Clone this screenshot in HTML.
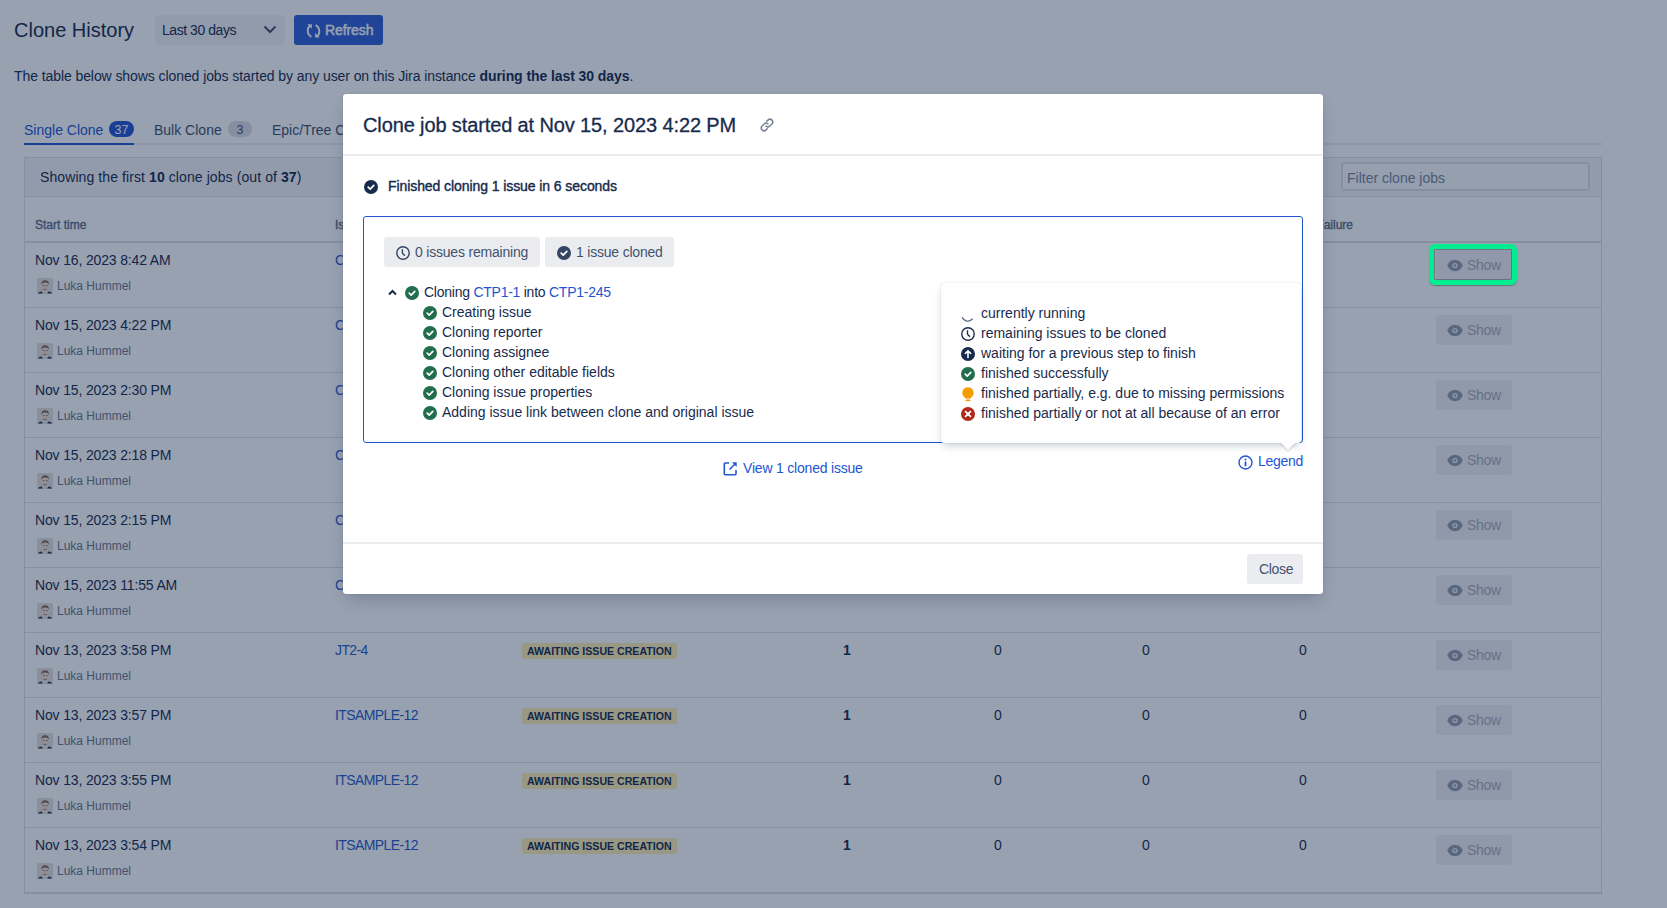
<!DOCTYPE html>
<html><head><meta charset="utf-8">
<style>
*{box-sizing:border-box}
html,body{margin:0;padding:0}
body{width:1667px;height:908px;overflow:hidden;position:relative;background:#fff;font-family:"Liberation Sans",sans-serif;color:#172b4d;font-size:14px}
.a{position:absolute;white-space:nowrap}
.t{line-height:1}
.lz{height:16px;width:155px;background:#fff0b3;border-radius:3px;font-size:10.6px;font-weight:bold;line-height:16px;padding-left:5px;color:#172b4d}
.g{width:14px;height:14px}
.btn{width:76px;height:30px;background:#f1f2f4;border-radius:3px;color:#a5adba}
</style></head><body>

<!-- page -->
<div class="a t" style="left:14px;top:20px;font-size:20px">Clone History</div>
<div class="a" style="left:155px;top:15px;width:130px;height:30px;background:#f4f5f7;border-radius:3px"></div>
<div class="a t" style="left:162px;top:23px;font-size:14px;letter-spacing:-0.45px">Last 30 days</div>
<svg class="a" style="left:263px;top:25px" width="14" height="9" viewBox="0 0 14 9"><path d="M1.5 1.5L7 7l5.5-5.5" stroke="#42526e" stroke-width="2" fill="none"/></svg>
<div class="a" style="left:294px;top:15px;width:89px;height:30px;background:#3060d6;border-radius:3px"></div>
<svg class="a" style="left:305px;top:23px" width="17" height="17" viewBox="0 0 17 17"><g fill="none" stroke="#fff" stroke-width="1.9"><path d="M5.4 2.6C2 4.4 1.4 11 6.4 14"/><path d="M10.6 2.2C15.6 4.8 15.2 11.8 11.6 13.6"/></g><path d="M2.4 1.2H6.9V5.7z" fill="#fff"/><path d="M10.1 9.9V14.6H14.6z" fill="#fff"/></svg>
<div class="a t" style="left:325px;top:23px;font-size:14px;color:#fff;-webkit-text-stroke:0.45px #fff;letter-spacing:-0.1px">Refresh</div>
<div class="a t" style="left:14px;top:69px;letter-spacing:-0.08px">The table below shows cloned jobs started by any user on this Jira instance <b>during the last 30 days</b>.</div>

<!-- tabs -->
<div class="a" style="left:24px;top:143px;width:1578px;height:2px;background:#ebecf0"></div>
<div class="a" style="left:24px;top:143px;width:110px;height:2px;background:#2355d2"></div>
<div class="a t" style="left:24px;top:123px;color:#2355d2">Single Clone</div>
<div class="a t" style="left:109px;top:121px;width:25px;height:16px;border-radius:8px;background:#2355d2;color:#fff;font-size:12.5px;line-height:18.5px;text-align:center">37</div>
<div class="a t" style="left:154px;top:123px;color:#42526e">Bulk Clone</div>
<div class="a t" style="left:228px;top:121px;width:24px;height:16px;border-radius:8px;background:#dfe1e6;color:#42526e;font-size:12.5px;line-height:18.5px;text-align:center">3</div>
<div class="a t" style="left:272px;top:123px;color:#42526e">Epic/Tree Clone</div>

<!-- table -->
<div class="a" style="left:24px;top:157px;width:1578px;height:736px;border:1px solid #dfe1e6"></div>
<div class="a" style="left:25px;top:158px;width:1576px;height:39px;background:#f4f5f7;border-bottom:1px solid #dfe1e6"></div>
<div class="a t" style="left:40px;top:170px;letter-spacing:0.09px">Showing the first <b>10</b> clone jobs (out of <b>37</b>)</div>
<div class="a" style="left:1341px;top:162px;width:249px;height:29px;border:2px solid #dfe1e6;border-radius:3px;background:#fafbfc"></div>
<div class="a t" style="left:1347px;top:171px;color:#7a869a">Filter clone jobs</div>
<div class="a t" style="left:35px;top:219px;font-size:12px;-webkit-text-stroke:0.35px #5e6c84;color:#5e6c84">Start time</div>
<div class="a t" style="left:335px;top:219px;font-size:12px;-webkit-text-stroke:0.35px #5e6c84;color:#5e6c84">Issue</div>
<div class="a t" style="right:314px;top:219px;font-size:12px;-webkit-text-stroke:0.35px #5e6c84;color:#5e6c84">Failure</div>
<div class="a" style="left:24px;top:241px;width:1578px;height:2px;background:#dfe1e6"></div>
<div class="a t" style="left:35px;top:253px;letter-spacing:-0.15px">Nov 16, 2023 8:42 AM</div>
<div class="a" style="left:37px;top:278px;width:16px;height:16px"><svg width="16" height="16" viewBox="0 0 16 16" style="position:absolute;left:0;top:0"><rect width="16" height="16" rx="1.5" fill="#e4e1de"/><path d="M4.6 6.8Q4.6 3 8.2 3 11.6 3 11.6 6.8L11.4 10Q10.6 13 8.1 13 5.6 13 4.8 10Z" fill="#f2e0d2"/><path d="M4.3 7.3Q4 2.4 8.2 2.3 12.2 2.4 12 7.3 11.6 4.6 8.2 4.5 4.8 4.6 4.3 7.3Z" fill="#8a6a55"/><path d="M6 7.6h1.5M9 7.6h1.5" stroke="#7a5a48" stroke-width=".9"/><path d="M6.4 11.2Q8.1 12.2 9.8 11.2" stroke="#8a6a5a" stroke-width=".8" fill="none"/><path d="M0.8 15.6Q2 13.8 4.5 13.6L5.8 15.6ZM15.2 15.6Q14 13.8 11.5 13.6L10.2 15.6Z" fill="#2a3048"/></svg></div>
<div class="a t" style="left:57px;top:280px;font-size:12px;color:#6b778c">Luka Hummel</div>
<div class="a t" style="left:335px;top:253px;color:#2a5ac8;letter-spacing:-0.6px">C</div>
<div class="a btn" style="left:1436px;top:250px"><svg width="16" height="13" viewBox="0 0 16 13" style="position:absolute;left:11px;top:9px"><path d="M8 .8C4.2 .8 1.3 3.6.4 6.5 1.3 9.4 4.2 12.2 8 12.2s6.7-2.8 7.6-5.7C14.7 3.6 11.8.8 8 .8z" fill="#939cac"/><circle cx="8" cy="6.5" r="2.6" fill="#eef0f2"/><circle cx="8" cy="6.5" r="1.2" fill="#939cac"/></svg><span style="position:absolute;left:31px;top:8px;line-height:1;letter-spacing:-0.3px">Show</span></div>
<div class="a" style="left:24px;top:307px;width:1578px;height:1px;background:#dfe1e6"></div>
<div class="a t" style="left:35px;top:318px;letter-spacing:-0.15px">Nov 15, 2023 4:22 PM</div>
<div class="a" style="left:37px;top:343px;width:16px;height:16px"><svg width="16" height="16" viewBox="0 0 16 16" style="position:absolute;left:0;top:0"><rect width="16" height="16" rx="1.5" fill="#e4e1de"/><path d="M4.6 6.8Q4.6 3 8.2 3 11.6 3 11.6 6.8L11.4 10Q10.6 13 8.1 13 5.6 13 4.8 10Z" fill="#f2e0d2"/><path d="M4.3 7.3Q4 2.4 8.2 2.3 12.2 2.4 12 7.3 11.6 4.6 8.2 4.5 4.8 4.6 4.3 7.3Z" fill="#8a6a55"/><path d="M6 7.6h1.5M9 7.6h1.5" stroke="#7a5a48" stroke-width=".9"/><path d="M6.4 11.2Q8.1 12.2 9.8 11.2" stroke="#8a6a5a" stroke-width=".8" fill="none"/><path d="M0.8 15.6Q2 13.8 4.5 13.6L5.8 15.6ZM15.2 15.6Q14 13.8 11.5 13.6L10.2 15.6Z" fill="#2a3048"/></svg></div>
<div class="a t" style="left:57px;top:345px;font-size:12px;color:#6b778c">Luka Hummel</div>
<div class="a t" style="left:335px;top:318px;color:#2a5ac8;letter-spacing:-0.6px">C</div>
<div class="a btn" style="left:1436px;top:315px"><svg width="16" height="13" viewBox="0 0 16 13" style="position:absolute;left:11px;top:9px"><path d="M8 .8C4.2 .8 1.3 3.6.4 6.5 1.3 9.4 4.2 12.2 8 12.2s6.7-2.8 7.6-5.7C14.7 3.6 11.8.8 8 .8z" fill="#939cac"/><circle cx="8" cy="6.5" r="2.6" fill="#eef0f2"/><circle cx="8" cy="6.5" r="1.2" fill="#939cac"/></svg><span style="position:absolute;left:31px;top:8px;line-height:1;letter-spacing:-0.3px">Show</span></div>
<div class="a" style="left:24px;top:372px;width:1578px;height:1px;background:#dfe1e6"></div>
<div class="a t" style="left:35px;top:383px;letter-spacing:-0.15px">Nov 15, 2023 2:30 PM</div>
<div class="a" style="left:37px;top:408px;width:16px;height:16px"><svg width="16" height="16" viewBox="0 0 16 16" style="position:absolute;left:0;top:0"><rect width="16" height="16" rx="1.5" fill="#e4e1de"/><path d="M4.6 6.8Q4.6 3 8.2 3 11.6 3 11.6 6.8L11.4 10Q10.6 13 8.1 13 5.6 13 4.8 10Z" fill="#f2e0d2"/><path d="M4.3 7.3Q4 2.4 8.2 2.3 12.2 2.4 12 7.3 11.6 4.6 8.2 4.5 4.8 4.6 4.3 7.3Z" fill="#8a6a55"/><path d="M6 7.6h1.5M9 7.6h1.5" stroke="#7a5a48" stroke-width=".9"/><path d="M6.4 11.2Q8.1 12.2 9.8 11.2" stroke="#8a6a5a" stroke-width=".8" fill="none"/><path d="M0.8 15.6Q2 13.8 4.5 13.6L5.8 15.6ZM15.2 15.6Q14 13.8 11.5 13.6L10.2 15.6Z" fill="#2a3048"/></svg></div>
<div class="a t" style="left:57px;top:410px;font-size:12px;color:#6b778c">Luka Hummel</div>
<div class="a t" style="left:335px;top:383px;color:#2a5ac8;letter-spacing:-0.6px">C</div>
<div class="a btn" style="left:1436px;top:380px"><svg width="16" height="13" viewBox="0 0 16 13" style="position:absolute;left:11px;top:9px"><path d="M8 .8C4.2 .8 1.3 3.6.4 6.5 1.3 9.4 4.2 12.2 8 12.2s6.7-2.8 7.6-5.7C14.7 3.6 11.8.8 8 .8z" fill="#939cac"/><circle cx="8" cy="6.5" r="2.6" fill="#eef0f2"/><circle cx="8" cy="6.5" r="1.2" fill="#939cac"/></svg><span style="position:absolute;left:31px;top:8px;line-height:1;letter-spacing:-0.3px">Show</span></div>
<div class="a" style="left:24px;top:437px;width:1578px;height:1px;background:#dfe1e6"></div>
<div class="a t" style="left:35px;top:448px;letter-spacing:-0.15px">Nov 15, 2023 2:18 PM</div>
<div class="a" style="left:37px;top:473px;width:16px;height:16px"><svg width="16" height="16" viewBox="0 0 16 16" style="position:absolute;left:0;top:0"><rect width="16" height="16" rx="1.5" fill="#e4e1de"/><path d="M4.6 6.8Q4.6 3 8.2 3 11.6 3 11.6 6.8L11.4 10Q10.6 13 8.1 13 5.6 13 4.8 10Z" fill="#f2e0d2"/><path d="M4.3 7.3Q4 2.4 8.2 2.3 12.2 2.4 12 7.3 11.6 4.6 8.2 4.5 4.8 4.6 4.3 7.3Z" fill="#8a6a55"/><path d="M6 7.6h1.5M9 7.6h1.5" stroke="#7a5a48" stroke-width=".9"/><path d="M6.4 11.2Q8.1 12.2 9.8 11.2" stroke="#8a6a5a" stroke-width=".8" fill="none"/><path d="M0.8 15.6Q2 13.8 4.5 13.6L5.8 15.6ZM15.2 15.6Q14 13.8 11.5 13.6L10.2 15.6Z" fill="#2a3048"/></svg></div>
<div class="a t" style="left:57px;top:475px;font-size:12px;color:#6b778c">Luka Hummel</div>
<div class="a t" style="left:335px;top:448px;color:#2a5ac8;letter-spacing:-0.6px">C</div>
<div class="a btn" style="left:1436px;top:445px"><svg width="16" height="13" viewBox="0 0 16 13" style="position:absolute;left:11px;top:9px"><path d="M8 .8C4.2 .8 1.3 3.6.4 6.5 1.3 9.4 4.2 12.2 8 12.2s6.7-2.8 7.6-5.7C14.7 3.6 11.8.8 8 .8z" fill="#939cac"/><circle cx="8" cy="6.5" r="2.6" fill="#eef0f2"/><circle cx="8" cy="6.5" r="1.2" fill="#939cac"/></svg><span style="position:absolute;left:31px;top:8px;line-height:1;letter-spacing:-0.3px">Show</span></div>
<div class="a" style="left:24px;top:502px;width:1578px;height:1px;background:#dfe1e6"></div>
<div class="a t" style="left:35px;top:513px;letter-spacing:-0.15px">Nov 15, 2023 2:15 PM</div>
<div class="a" style="left:37px;top:538px;width:16px;height:16px"><svg width="16" height="16" viewBox="0 0 16 16" style="position:absolute;left:0;top:0"><rect width="16" height="16" rx="1.5" fill="#e4e1de"/><path d="M4.6 6.8Q4.6 3 8.2 3 11.6 3 11.6 6.8L11.4 10Q10.6 13 8.1 13 5.6 13 4.8 10Z" fill="#f2e0d2"/><path d="M4.3 7.3Q4 2.4 8.2 2.3 12.2 2.4 12 7.3 11.6 4.6 8.2 4.5 4.8 4.6 4.3 7.3Z" fill="#8a6a55"/><path d="M6 7.6h1.5M9 7.6h1.5" stroke="#7a5a48" stroke-width=".9"/><path d="M6.4 11.2Q8.1 12.2 9.8 11.2" stroke="#8a6a5a" stroke-width=".8" fill="none"/><path d="M0.8 15.6Q2 13.8 4.5 13.6L5.8 15.6ZM15.2 15.6Q14 13.8 11.5 13.6L10.2 15.6Z" fill="#2a3048"/></svg></div>
<div class="a t" style="left:57px;top:540px;font-size:12px;color:#6b778c">Luka Hummel</div>
<div class="a t" style="left:335px;top:513px;color:#2a5ac8;letter-spacing:-0.6px">C</div>
<div class="a btn" style="left:1436px;top:510px"><svg width="16" height="13" viewBox="0 0 16 13" style="position:absolute;left:11px;top:9px"><path d="M8 .8C4.2 .8 1.3 3.6.4 6.5 1.3 9.4 4.2 12.2 8 12.2s6.7-2.8 7.6-5.7C14.7 3.6 11.8.8 8 .8z" fill="#939cac"/><circle cx="8" cy="6.5" r="2.6" fill="#eef0f2"/><circle cx="8" cy="6.5" r="1.2" fill="#939cac"/></svg><span style="position:absolute;left:31px;top:8px;line-height:1;letter-spacing:-0.3px">Show</span></div>
<div class="a" style="left:24px;top:567px;width:1578px;height:1px;background:#dfe1e6"></div>
<div class="a t" style="left:35px;top:578px;letter-spacing:-0.15px">Nov 15, 2023 11:55 AM</div>
<div class="a" style="left:37px;top:603px;width:16px;height:16px"><svg width="16" height="16" viewBox="0 0 16 16" style="position:absolute;left:0;top:0"><rect width="16" height="16" rx="1.5" fill="#e4e1de"/><path d="M4.6 6.8Q4.6 3 8.2 3 11.6 3 11.6 6.8L11.4 10Q10.6 13 8.1 13 5.6 13 4.8 10Z" fill="#f2e0d2"/><path d="M4.3 7.3Q4 2.4 8.2 2.3 12.2 2.4 12 7.3 11.6 4.6 8.2 4.5 4.8 4.6 4.3 7.3Z" fill="#8a6a55"/><path d="M6 7.6h1.5M9 7.6h1.5" stroke="#7a5a48" stroke-width=".9"/><path d="M6.4 11.2Q8.1 12.2 9.8 11.2" stroke="#8a6a5a" stroke-width=".8" fill="none"/><path d="M0.8 15.6Q2 13.8 4.5 13.6L5.8 15.6ZM15.2 15.6Q14 13.8 11.5 13.6L10.2 15.6Z" fill="#2a3048"/></svg></div>
<div class="a t" style="left:57px;top:605px;font-size:12px;color:#6b778c">Luka Hummel</div>
<div class="a t" style="left:335px;top:578px;color:#2a5ac8;letter-spacing:-0.6px">C</div>
<div class="a btn" style="left:1436px;top:575px"><svg width="16" height="13" viewBox="0 0 16 13" style="position:absolute;left:11px;top:9px"><path d="M8 .8C4.2 .8 1.3 3.6.4 6.5 1.3 9.4 4.2 12.2 8 12.2s6.7-2.8 7.6-5.7C14.7 3.6 11.8.8 8 .8z" fill="#939cac"/><circle cx="8" cy="6.5" r="2.6" fill="#eef0f2"/><circle cx="8" cy="6.5" r="1.2" fill="#939cac"/></svg><span style="position:absolute;left:31px;top:8px;line-height:1;letter-spacing:-0.3px">Show</span></div>
<div class="a" style="left:24px;top:632px;width:1578px;height:1px;background:#dfe1e6"></div>
<div class="a t" style="left:35px;top:643px;letter-spacing:-0.15px">Nov 13, 2023 3:58 PM</div>
<div class="a" style="left:37px;top:668px;width:16px;height:16px"><svg width="16" height="16" viewBox="0 0 16 16" style="position:absolute;left:0;top:0"><rect width="16" height="16" rx="1.5" fill="#e4e1de"/><path d="M4.6 6.8Q4.6 3 8.2 3 11.6 3 11.6 6.8L11.4 10Q10.6 13 8.1 13 5.6 13 4.8 10Z" fill="#f2e0d2"/><path d="M4.3 7.3Q4 2.4 8.2 2.3 12.2 2.4 12 7.3 11.6 4.6 8.2 4.5 4.8 4.6 4.3 7.3Z" fill="#8a6a55"/><path d="M6 7.6h1.5M9 7.6h1.5" stroke="#7a5a48" stroke-width=".9"/><path d="M6.4 11.2Q8.1 12.2 9.8 11.2" stroke="#8a6a5a" stroke-width=".8" fill="none"/><path d="M0.8 15.6Q2 13.8 4.5 13.6L5.8 15.6ZM15.2 15.6Q14 13.8 11.5 13.6L10.2 15.6Z" fill="#2a3048"/></svg></div>
<div class="a t" style="left:57px;top:670px;font-size:12px;color:#6b778c">Luka Hummel</div>
<div class="a t" style="left:335px;top:643px;color:#2a5ac8;letter-spacing:-0.6px">JT2-4</div>
<div class="a lz" style="left:522px;top:643px">AWAITING ISSUE CREATION</div>
<div class="a t" style="left:843px;top:643px;font-weight:bold">1</div>
<div class="a t" style="left:994px;top:643px">0</div>
<div class="a t" style="left:1142px;top:643px">0</div>
<div class="a t" style="left:1299px;top:643px">0</div>
<div class="a btn" style="left:1436px;top:640px"><svg width="16" height="13" viewBox="0 0 16 13" style="position:absolute;left:11px;top:9px"><path d="M8 .8C4.2 .8 1.3 3.6.4 6.5 1.3 9.4 4.2 12.2 8 12.2s6.7-2.8 7.6-5.7C14.7 3.6 11.8.8 8 .8z" fill="#939cac"/><circle cx="8" cy="6.5" r="2.6" fill="#eef0f2"/><circle cx="8" cy="6.5" r="1.2" fill="#939cac"/></svg><span style="position:absolute;left:31px;top:8px;line-height:1;letter-spacing:-0.3px">Show</span></div>
<div class="a" style="left:24px;top:697px;width:1578px;height:1px;background:#dfe1e6"></div>
<div class="a t" style="left:35px;top:708px;letter-spacing:-0.15px">Nov 13, 2023 3:57 PM</div>
<div class="a" style="left:37px;top:733px;width:16px;height:16px"><svg width="16" height="16" viewBox="0 0 16 16" style="position:absolute;left:0;top:0"><rect width="16" height="16" rx="1.5" fill="#e4e1de"/><path d="M4.6 6.8Q4.6 3 8.2 3 11.6 3 11.6 6.8L11.4 10Q10.6 13 8.1 13 5.6 13 4.8 10Z" fill="#f2e0d2"/><path d="M4.3 7.3Q4 2.4 8.2 2.3 12.2 2.4 12 7.3 11.6 4.6 8.2 4.5 4.8 4.6 4.3 7.3Z" fill="#8a6a55"/><path d="M6 7.6h1.5M9 7.6h1.5" stroke="#7a5a48" stroke-width=".9"/><path d="M6.4 11.2Q8.1 12.2 9.8 11.2" stroke="#8a6a5a" stroke-width=".8" fill="none"/><path d="M0.8 15.6Q2 13.8 4.5 13.6L5.8 15.6ZM15.2 15.6Q14 13.8 11.5 13.6L10.2 15.6Z" fill="#2a3048"/></svg></div>
<div class="a t" style="left:57px;top:735px;font-size:12px;color:#6b778c">Luka Hummel</div>
<div class="a t" style="left:335px;top:708px;color:#2a5ac8;letter-spacing:-0.6px">ITSAMPLE-12</div>
<div class="a lz" style="left:522px;top:708px">AWAITING ISSUE CREATION</div>
<div class="a t" style="left:843px;top:708px;font-weight:bold">1</div>
<div class="a t" style="left:994px;top:708px">0</div>
<div class="a t" style="left:1142px;top:708px">0</div>
<div class="a t" style="left:1299px;top:708px">0</div>
<div class="a btn" style="left:1436px;top:705px"><svg width="16" height="13" viewBox="0 0 16 13" style="position:absolute;left:11px;top:9px"><path d="M8 .8C4.2 .8 1.3 3.6.4 6.5 1.3 9.4 4.2 12.2 8 12.2s6.7-2.8 7.6-5.7C14.7 3.6 11.8.8 8 .8z" fill="#939cac"/><circle cx="8" cy="6.5" r="2.6" fill="#eef0f2"/><circle cx="8" cy="6.5" r="1.2" fill="#939cac"/></svg><span style="position:absolute;left:31px;top:8px;line-height:1;letter-spacing:-0.3px">Show</span></div>
<div class="a" style="left:24px;top:762px;width:1578px;height:1px;background:#dfe1e6"></div>
<div class="a t" style="left:35px;top:773px;letter-spacing:-0.15px">Nov 13, 2023 3:55 PM</div>
<div class="a" style="left:37px;top:798px;width:16px;height:16px"><svg width="16" height="16" viewBox="0 0 16 16" style="position:absolute;left:0;top:0"><rect width="16" height="16" rx="1.5" fill="#e4e1de"/><path d="M4.6 6.8Q4.6 3 8.2 3 11.6 3 11.6 6.8L11.4 10Q10.6 13 8.1 13 5.6 13 4.8 10Z" fill="#f2e0d2"/><path d="M4.3 7.3Q4 2.4 8.2 2.3 12.2 2.4 12 7.3 11.6 4.6 8.2 4.5 4.8 4.6 4.3 7.3Z" fill="#8a6a55"/><path d="M6 7.6h1.5M9 7.6h1.5" stroke="#7a5a48" stroke-width=".9"/><path d="M6.4 11.2Q8.1 12.2 9.8 11.2" stroke="#8a6a5a" stroke-width=".8" fill="none"/><path d="M0.8 15.6Q2 13.8 4.5 13.6L5.8 15.6ZM15.2 15.6Q14 13.8 11.5 13.6L10.2 15.6Z" fill="#2a3048"/></svg></div>
<div class="a t" style="left:57px;top:800px;font-size:12px;color:#6b778c">Luka Hummel</div>
<div class="a t" style="left:335px;top:773px;color:#2a5ac8;letter-spacing:-0.6px">ITSAMPLE-12</div>
<div class="a lz" style="left:522px;top:773px">AWAITING ISSUE CREATION</div>
<div class="a t" style="left:843px;top:773px;font-weight:bold">1</div>
<div class="a t" style="left:994px;top:773px">0</div>
<div class="a t" style="left:1142px;top:773px">0</div>
<div class="a t" style="left:1299px;top:773px">0</div>
<div class="a btn" style="left:1436px;top:770px"><svg width="16" height="13" viewBox="0 0 16 13" style="position:absolute;left:11px;top:9px"><path d="M8 .8C4.2 .8 1.3 3.6.4 6.5 1.3 9.4 4.2 12.2 8 12.2s6.7-2.8 7.6-5.7C14.7 3.6 11.8.8 8 .8z" fill="#939cac"/><circle cx="8" cy="6.5" r="2.6" fill="#eef0f2"/><circle cx="8" cy="6.5" r="1.2" fill="#939cac"/></svg><span style="position:absolute;left:31px;top:8px;line-height:1;letter-spacing:-0.3px">Show</span></div>
<div class="a" style="left:24px;top:827px;width:1578px;height:1px;background:#dfe1e6"></div>
<div class="a t" style="left:35px;top:838px;letter-spacing:-0.15px">Nov 13, 2023 3:54 PM</div>
<div class="a" style="left:37px;top:863px;width:16px;height:16px"><svg width="16" height="16" viewBox="0 0 16 16" style="position:absolute;left:0;top:0"><rect width="16" height="16" rx="1.5" fill="#e4e1de"/><path d="M4.6 6.8Q4.6 3 8.2 3 11.6 3 11.6 6.8L11.4 10Q10.6 13 8.1 13 5.6 13 4.8 10Z" fill="#f2e0d2"/><path d="M4.3 7.3Q4 2.4 8.2 2.3 12.2 2.4 12 7.3 11.6 4.6 8.2 4.5 4.8 4.6 4.3 7.3Z" fill="#8a6a55"/><path d="M6 7.6h1.5M9 7.6h1.5" stroke="#7a5a48" stroke-width=".9"/><path d="M6.4 11.2Q8.1 12.2 9.8 11.2" stroke="#8a6a5a" stroke-width=".8" fill="none"/><path d="M0.8 15.6Q2 13.8 4.5 13.6L5.8 15.6ZM15.2 15.6Q14 13.8 11.5 13.6L10.2 15.6Z" fill="#2a3048"/></svg></div>
<div class="a t" style="left:57px;top:865px;font-size:12px;color:#6b778c">Luka Hummel</div>
<div class="a t" style="left:335px;top:838px;color:#2a5ac8;letter-spacing:-0.6px">ITSAMPLE-12</div>
<div class="a lz" style="left:522px;top:838px">AWAITING ISSUE CREATION</div>
<div class="a t" style="left:843px;top:838px;font-weight:bold">1</div>
<div class="a t" style="left:994px;top:838px">0</div>
<div class="a t" style="left:1142px;top:838px">0</div>
<div class="a t" style="left:1299px;top:838px">0</div>
<div class="a btn" style="left:1436px;top:835px"><svg width="16" height="13" viewBox="0 0 16 13" style="position:absolute;left:11px;top:9px"><path d="M8 .8C4.2 .8 1.3 3.6.4 6.5 1.3 9.4 4.2 12.2 8 12.2s6.7-2.8 7.6-5.7C14.7 3.6 11.8.8 8 .8z" fill="#939cac"/><circle cx="8" cy="6.5" r="2.6" fill="#eef0f2"/><circle cx="8" cy="6.5" r="1.2" fill="#939cac"/></svg><span style="position:absolute;left:31px;top:8px;line-height:1;letter-spacing:-0.3px">Show</span></div>
<div class="a" style="left:24px;top:892px;width:1578px;height:2px;background:#dfe1e6"></div>

<!-- blanket -->
<div class="a" style="left:0;top:0;width:1667px;height:908px;background:rgba(9,30,66,0.42)"></div>

<!-- highlight -->
<div class="a" style="left:1429px;top:244px;width:88px;height:41px;border:5px solid #00ee90;border-radius:6px;box-shadow:inset 0 0 0 1px rgba(60,50,70,.4), 0 1px 1px rgba(0,0,0,.3)"></div>

<!-- modal -->
<div class="a" style="left:343px;top:94px;width:980px;height:500px;background:#fff;border-radius:3px;box-shadow:0 8px 16px -4px rgba(9,30,66,0.25),0 0 1px rgba(9,30,66,0.31)">
</div>
<div class="a t" style="left:363px;top:115px;font-size:20px;letter-spacing:-0.12px;-webkit-text-stroke:0.3px #172b4d">Clone job started at Nov 15, 2023 4:22 PM</div>
<svg class="a" style="left:759px;top:117px" width="16" height="16" viewBox="0 0 16 16"><g transform="rotate(-45 8 8)" fill="none" stroke="#758195" stroke-width="1.45" stroke-linecap="round"><path d="M5.6 10.8H3.9A2.8 2.8 0 0 1 3.9 5.2H6.7A2.8 2.8 0 0 1 9.5 8"/><path d="M10.4 5.2H12.1A2.8 2.8 0 0 1 12.1 10.8H9.3A2.8 2.8 0 0 1 6.5 8"/></g></svg>
<div class="a" style="left:343px;top:154px;width:980px;height:2px;background:#ebecf0"></div>

<svg class="a" style="left:364px;top:180px" width="14" height="14" viewBox="0 0 14 14"><circle cx="7" cy="7" r="7" fill="#172b4d"/><path d="M4.2 7.2l2 1.9 3.6-3.8" stroke="#fff" stroke-width="1.7" fill="none" stroke-linecap="round" stroke-linejoin="round"/></svg>
<div class="a t" style="left:388px;top:179px;-webkit-text-stroke:0.4px #172b4d;letter-spacing:-0.08px">Finished cloning 1 issue in 6 seconds</div>

<div class="a" style="left:363px;top:216px;width:940px;height:227px;border:1px solid #2355d2;border-radius:3px"></div>

<div class="a" style="left:384px;top:237px;width:156px;height:30px;background:#ebecf0;border-radius:3px"></div>
<svg class="a" style="left:396px;top:246px" width="14" height="14" viewBox="0 0 14 14"><circle cx="7" cy="7" r="6.2" fill="none" stroke="#344563" stroke-width="1.4"/><path d="M6.4 3.2v4.1l2.5 2.5" fill="none" stroke="#344563" stroke-width="1.4"/></svg>
<div class="a t" style="left:415px;top:245px;letter-spacing:-0.2px;color:#42526e">0 issues remaining</div>
<div class="a" style="left:545px;top:237px;width:129px;height:30px;background:#ebecf0;border-radius:3px"></div>
<svg class="a" style="left:557px;top:246px" width="14" height="14" viewBox="0 0 14 14"><circle cx="7" cy="7" r="7" fill="#344563"/><path d="M4.2 7.2l2 1.9 3.6-3.8" stroke="#fff" stroke-width="1.7" fill="none" stroke-linecap="round" stroke-linejoin="round"/></svg>
<div class="a t" style="left:576px;top:245px;letter-spacing:-0.2px;color:#42526e">1 issue cloned</div>

<svg class="a" style="left:388px;top:289px" width="9" height="7" viewBox="0 0 9 7"><path d="M1 5.5l3.5-3.5 3.5 3.5" stroke="#172b4d" stroke-width="2" fill="none"/></svg>
<svg class="a" style="left:405px;top:286px" width="14" height="14" viewBox="0 0 14 14"><circle cx="7" cy="7" r="7" fill="#216e4e"/><path d="M4.2 7.2l2 1.9 3.6-3.8" stroke="#fff" stroke-width="1.7" fill="none" stroke-linecap="round" stroke-linejoin="round"/></svg>
<div class="a t" style="left:424px;top:285px;letter-spacing:-0.25px">Cloning <span style="color:#2355d2">CTP1-1</span> into <span style="color:#2355d2">CTP1-245</span></div>

<svg class="a" style="left:423px;top:306px" width="14" height="14" viewBox="0 0 14 14"><circle cx="7" cy="7" r="7" fill="#216e4e"/><path d="M4.2 7.2l2 1.9 3.6-3.8" stroke="#fff" stroke-width="1.7" fill="none" stroke-linecap="round" stroke-linejoin="round"/></svg>
<div class="a t" style="left:442px;top:305px">Creating issue</div>
<svg class="a" style="left:423px;top:326px" width="14" height="14" viewBox="0 0 14 14"><circle cx="7" cy="7" r="7" fill="#216e4e"/><path d="M4.2 7.2l2 1.9 3.6-3.8" stroke="#fff" stroke-width="1.7" fill="none" stroke-linecap="round" stroke-linejoin="round"/></svg>
<div class="a t" style="left:442px;top:325px">Cloning reporter</div>
<svg class="a" style="left:423px;top:346px" width="14" height="14" viewBox="0 0 14 14"><circle cx="7" cy="7" r="7" fill="#216e4e"/><path d="M4.2 7.2l2 1.9 3.6-3.8" stroke="#fff" stroke-width="1.7" fill="none" stroke-linecap="round" stroke-linejoin="round"/></svg>
<div class="a t" style="left:442px;top:345px">Cloning assignee</div>
<svg class="a" style="left:423px;top:366px" width="14" height="14" viewBox="0 0 14 14"><circle cx="7" cy="7" r="7" fill="#216e4e"/><path d="M4.2 7.2l2 1.9 3.6-3.8" stroke="#fff" stroke-width="1.7" fill="none" stroke-linecap="round" stroke-linejoin="round"/></svg>
<div class="a t" style="left:442px;top:365px">Cloning other editable fields</div>
<svg class="a" style="left:423px;top:386px" width="14" height="14" viewBox="0 0 14 14"><circle cx="7" cy="7" r="7" fill="#216e4e"/><path d="M4.2 7.2l2 1.9 3.6-3.8" stroke="#fff" stroke-width="1.7" fill="none" stroke-linecap="round" stroke-linejoin="round"/></svg>
<div class="a t" style="left:442px;top:385px">Cloning issue properties</div>
<svg class="a" style="left:423px;top:406px" width="14" height="14" viewBox="0 0 14 14"><circle cx="7" cy="7" r="7" fill="#216e4e"/><path d="M4.2 7.2l2 1.9 3.6-3.8" stroke="#fff" stroke-width="1.7" fill="none" stroke-linecap="round" stroke-linejoin="round"/></svg>
<div class="a t" style="left:442px;top:405px">Adding issue link between clone and original issue</div>

<!-- legend popup -->
<div class="a" style="left:941px;top:283px;width:360px;height:160px;background:#fff;border-radius:3px;box-shadow:0 4px 8px -2px rgba(9,30,66,0.25),0 0 1px rgba(9,30,66,0.31)"></div>
<svg class="a" style="left:1278px;top:441px" width="20" height="12" viewBox="0 0 20 12"><path d="M2 1L10 9 18 1z" fill="#fff" style="filter:drop-shadow(0 1px 1px rgba(9,30,66,.2))"/></svg>
<svg class="a" style="left:961px;top:309px" width="14" height="14" viewBox="0 0 14 14"><path d="M1.4 8.6A5.8 5.8 0 0 0 11.2 10" fill="none" stroke="#5e6c84" stroke-width="1.3" stroke-linecap="round"/></svg>
<div class="a t" style="left:981px;top:306px">currently running</div>
<svg class="a" style="left:961px;top:327px" width="14" height="14" viewBox="0 0 14 14"><circle cx="7" cy="7" r="6.25" fill="none" stroke="#172b4d" stroke-width="1.35"/><path d="M6.5 3.2v4.1l2.5 2.5" fill="none" stroke="#172b4d" stroke-width="1.35"/></svg>
<div class="a t" style="left:981px;top:326px">remaining issues to be cloned</div>
<svg class="a" style="left:961px;top:347px" width="14" height="14" viewBox="0 0 14 14"><circle cx="7" cy="7" r="7" fill="#172b4d"/><path d="M7 10.5V4M4.3 6.5L7 3.8l2.7 2.7" stroke="#fff" stroke-width="1.6" fill="none" stroke-linecap="round" stroke-linejoin="round"/></svg>
<div class="a t" style="left:981px;top:346px">waiting for a previous step to finish</div>
<svg class="a" style="left:961px;top:367px" width="14" height="14" viewBox="0 0 14 14"><circle cx="7" cy="7" r="7" fill="#216e4e"/><path d="M4.2 7.2l2 1.9 3.6-3.8" stroke="#fff" stroke-width="1.7" fill="none" stroke-linecap="round" stroke-linejoin="round"/></svg>
<div class="a t" style="left:981px;top:366px">finished successfully</div>
<svg class="a" style="left:962px;top:387px" width="12" height="15" viewBox="0 0 12 15"><path d="M6 0.3A5.6 5.6 0 0 0 2.4 10.2L3.5 11.6h5L9.6 10.2A5.6 5.6 0 0 0 6 0.3z" fill="#f29d00"/><rect x="3.6" y="12.4" width="4.8" height="1.9" rx=".6" fill="#f29d00"/></svg>
<div class="a t" style="left:981px;top:386px">finished partially, e.g. due to missing permissions</div>
<svg class="a" style="left:961px;top:407px" width="14" height="14" viewBox="0 0 14 14"><circle cx="7" cy="7" r="7" fill="#ae2a19"/><path d="M4.6 4.6l4.8 4.8M9.4 4.6l-4.8 4.8" stroke="#fff" stroke-width="1.8" stroke-linecap="round"/></svg>
<div class="a t" style="left:981px;top:406px">finished partially or not at all because of an error</div>

<svg class="a" style="left:1238px;top:455px" width="15" height="15" viewBox="0 0 15 15"><circle cx="7.5" cy="7.5" r="6.5" fill="none" stroke="#2355d2" stroke-width="1.4"/><circle cx="7.5" cy="4.4" r="1" fill="#2355d2"/><path d="M7.5 6.6v4.6" stroke="#2355d2" stroke-width="1.8"/></svg>
<div class="a t" style="left:1258px;top:454px;color:#2355d2;letter-spacing:-0.3px">Legend</div>

<svg class="a" style="left:723px;top:461px" width="15" height="15" viewBox="0 0 15 15"><path d="M6 2H2.2a.9.9 0 0 0-.9.9v9.9a.9.9 0 0 0 .9.9h9.9a.9.9 0 0 0 .9-.9V9" fill="none" stroke="#2355d2" stroke-width="1.6"/><path d="M6.5 8.5L12.8 2.2" stroke="#2355d2" stroke-width="1.6"/><path d="M9 1.3h4.7V6z" fill="#2355d2"/></svg>
<div class="a t" style="left:743px;top:461px;color:#2355d2;letter-spacing:-0.2px">View 1 cloned issue</div>

<div class="a" style="left:343px;top:542px;width:980px;height:2px;background:#ebecf0"></div>
<div class="a" style="left:1247px;top:554px;width:56px;height:30px;background:#ebecf0;border-radius:3px"></div>
<div class="a t" style="left:1259px;top:562px;letter-spacing:-0.3px;color:#42526e">Close</div>

</body></html>
